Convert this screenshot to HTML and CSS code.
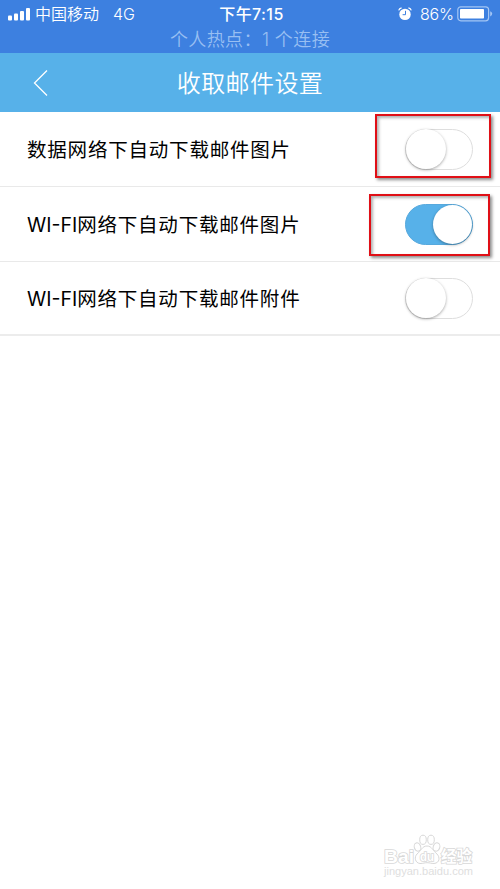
FILE: index.html
```html
<!DOCTYPE html>
<html lang="zh-CN">
<head>
<meta charset="utf-8">
<title>收取邮件设置</title>
<link rel="stylesheet" href="styles.css">
</head>
<body>
<header class="status">
  <div class="status-row">
    <div class="status-left">
      <svg class="signal" width="22" height="13" viewBox="0 0 22 13" fill="#fff"><rect x="0" y="7.5" width="4" height="5" rx="1"/><rect x="6" y="5.5" width="4" height="7" rx="1"/><rect x="12" y="3" width="4" height="9.500" rx="1"/><rect x="18" y="0" width="4" height="12.500" rx="1"/></svg>
      <span class="carrier">中国移动</span>
      <span class="network">4G</span>
    </div>
    <time class="clock">下午7:15</time>
    <div class="status-right">
      <svg class="alarm" width="14" height="14" viewBox="0 0 14 14"><circle cx="7" cy="7.400" r="5.700" fill="#fff"/><path d="M.7 3.400Q1.300 1.300 3.600.8M10.400.8Q12.700 1.300 13.300 3.400" fill="none" stroke="#fff" stroke-width="1.200"/><path d="M7.500 3.800V7.700H4.600" fill="none" stroke="#3d80e0" stroke-width="1"/></svg>
      <span class="percent">86%</span>
      <svg class="battery" width="36" height="16" viewBox="0 0 36 16"><rect x=".8" y=".8" width="30.800" height="14" rx="3" fill="none" stroke="#a3c5f4" stroke-width="1.200"/><rect x="3" y="3" width="24" height="9.600" rx=".8" fill="#fff"/><path d="M33.200 5.200Q35.200 6 35.200 7.800T33.200 10.400Z" fill="#a3c5f4"/></svg>
    </div>
  </div>
  <div class="hotspot">个人热点：1 个连接</div>
</header>
<nav class="nav">
  <svg class="back" width="16" height="28" viewBox="0 0 16 28"><path d="M14 1.500L1.500 14L14 26.500" fill="none" stroke="#fff" stroke-width="1.300"/></svg>
  <h1 class="title">收取邮件设置</h1>
</nav>
<main class="list">
  <div class="row"><span class="label">数据网络下自动下载邮件图片</span><span class="toggle"><i class="knob"></i></span><div class="mark mark-first"></div></div>
  <div class="row"><span class="label"><span class="latin">WI-FI</span>网络下自动下载邮件图片</span><span class="toggle on"><i class="knob"></i></span><div class="mark mark-second"></div></div>
  <div class="row last"><span class="label"><span class="latin">WI-FI</span>网络下自动下载邮件附件</span><span class="toggle"><i class="knob"></i></span></div>
</main>
<svg class="watermark" width="100" height="56" viewBox="0 0 100 56">
  <g class="brand">
    <text x="3" y="29.500" font-size="19" textLength="30" lengthAdjust="spacingAndGlyphs">Bai</text>
    <ellipse cx="36.500" cy="14" rx="3.200" ry="4.300" transform="rotate(-18 36.500 14)"/>
    <ellipse cx="42" cy="6.800" rx="3.300" ry="4.600"/>
    <ellipse cx="50" cy="6.800" rx="3.300" ry="4.600"/>
    <ellipse cx="55.500" cy="14" rx="3.300" ry="4.300" transform="rotate(18 55.500 14)"/>
    <path d="M46 13C41 13 40 18 36 21C33 24 34 30 39 30.500C43 30.500 43 29.700 46 29.700S50 30.500 53 30.500C59 30 59 24 56 21C52 18 51 13 46 13Z"/>
    <text x="39" y="27.500" font-size="12" textLength="14" lengthAdjust="spacingAndGlyphs">du</text>
    <text x="60" y="28.500" font-size="15.500" textLength="31">经验</text>
  </g>
  <text class="site" x="3" y="42" textLength="89" lengthAdjust="spacingAndGlyphs">jingyan.baidu.com</text>
</svg>
</body>
</html>
```
FILE: styles.css
```css
* { box-sizing: border-box; }
body {
  margin: 0;
  width: 500px;
  height: 889px;
  overflow: hidden;
  position: relative;
  background: #fff;
  font-family: "Inter", "Noto Sans CJK SC", sans-serif;
}
.status {
  height: 53px;
  background: #3d80e0;
  color: #fff;
}
.status-row {
  height: 28px;
  padding: 0 8px;
  display: grid;
  grid-template-columns: 1fr auto 1fr;
  align-items: center;
  font-size: 16px;
  line-height: 28px;
}
.status-left, .status-right { display: flex; align-items: center; }
.status-right { justify-content: flex-end; }
.carrier { margin-left: 5px; font-weight: 350; }
.network { margin-left: 14px; font-weight: 350; }
.clock { font-weight: 500; letter-spacing: .4px; padding-left: 3px; }
.percent { margin: 0 3px 0 8px; font-weight: 350; letter-spacing: -.1px; }
.battery { margin-right: -1px; }
.alarm { margin-top: -1px; }
.hotspot {
  text-align: center;
  font-size: 18px;
  line-height: 24px;
  letter-spacing: .4px;
  font-weight: 350;
  color: #98bff2;
}
.nav {
  height: 59px;
  background: #57b1e9;
  color: #fff;
  display: grid;
  grid-template-columns: 60px 1fr 60px;
  align-items: center;
}
.back { margin-left: 33px; }
.title {
  margin: 0;
  padding-top: 2px;
  text-align: center;
  font-weight: 350;
  font-size: 24px;
  line-height: 57px;
  letter-spacing: .4px;
}
.row {
  position: relative;
  height: 75px;
  padding: 0 27px;
  display: flex;
  align-items: center;
  justify-content: space-between;
  border-bottom: 1px solid #e9e9e9;
}
.last { height: 74px; border-bottom: 2px solid #ececec; }
.label {
  padding-top: 2px;
  font-size: 19.5px;
  line-height: 30px;
  letter-spacing: .8px;
  color: #000;
  white-space: nowrap;
}
.latin { letter-spacing: 0; }
.toggle {
  width: 68px;
  height: 41px;
  border: 1px solid #dedede;
  border-radius: 21px;
  display: flex;
  align-items: center;
  background: #fff;
}
.knob {
  flex: none;
  width: 40px;
  height: 40px;
  border-radius: 50%;
  background: #fff;
  box-shadow: 0 1px 3px rgba(0, 0, 0, .35);
}
.on { background: #57b1e9; border-color: #57a9dd; justify-content: flex-end; }
.on .knob { width: 39px; height: 39px; }
.mark {
  position: absolute;
  border: 2px solid #e00f16;
  box-shadow: 2px 2px 3px rgba(0, 0, 0, .45), inset 2px 2px 3px rgba(0, 0, 0, .3);
}
.mark-first { left: 375px; top: 2px; width: 116px; height: 64px; }
.mark-second { left: 369px; top: 7px; width: 121px; height: 62px; }
.watermark { position: absolute; left: 381px; top: 833px; }
.brand {
  fill: #fff;
  stroke: #d8d8d8;
  stroke-width: 1px;
  font-family: "Liberation Sans", "Noto Sans CJK SC", sans-serif;
  font-weight: bold;
}
.brand text { stroke-width: 1.6px; paint-order: stroke; }
.site { font: 10.5px "Liberation Sans", sans-serif; fill: #dedede; }
```
